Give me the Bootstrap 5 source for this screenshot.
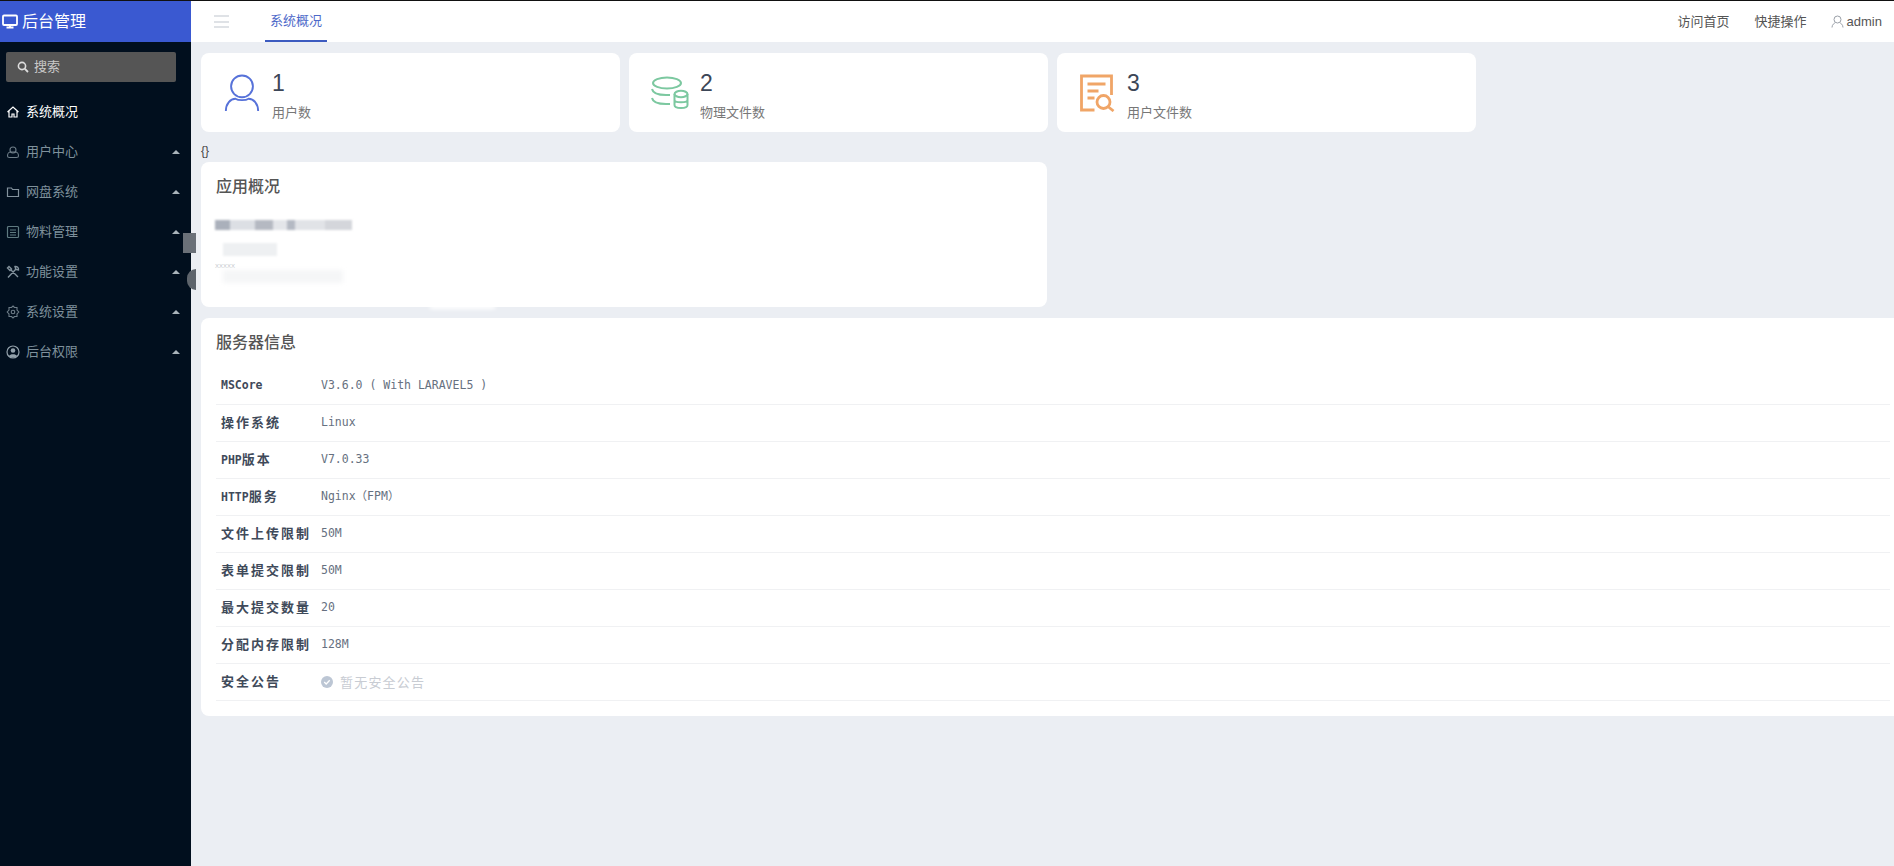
<!DOCTYPE html>
<html lang="zh">
<head>
<meta charset="utf-8">
<title>后台管理</title>
<link href="https://cdn.jsdelivr.net/npm/bootstrap@5.3.0/dist/css/bootstrap.min.css" rel="stylesheet">
<style>
html,body{height:100%;}
body{background:#ebeef3;font-family:"Liberation Sans","Noto Sans CJK SC",sans-serif;color:#555;font-size:13px;overflow:hidden;}
.topline{height:1px;background:#111;}
.shell{height:865px;}
.side{width:191px;flex:none;background:#010f1e;}
.brand{height:41px;background:#3a59d1;color:#fff;font-size:16px;padding-left:2px;gap:4px;}
.searchbox{height:30px;margin:10px 15px 10px 6px;width:170px;background:#555;border-radius:2px;color:#c9c9c9;font-size:13px;padding-left:11px;gap:5px;}
.menu-link{height:40px;color:#7f919c;font-size:13px;padding:0 11px 0 6px;gap:6px;}
.menu-link.on{color:#fff;}
.menu-link svg{width:14px;height:14px;flex:none;}
.up{width:0;height:0;border:4px solid transparent;border-top:0;border-bottom:4px solid #a9b4bb;margin-left:auto;}
.workspace{min-width:0;}
.headbar{height:41px;background:#fff;padding:0 12px 0 23px;}
.burger{width:15px;height:13px;flex:none;border-top:2px solid #dfe2e6;border-bottom:2px solid #dfe2e6;position:relative;margin-right:36px;}
.burger::after{content:"";position:absolute;left:0;right:0;top:3.5px;height:2px;background:#dfe2e6;}
.tabitem{height:41px;width:62px;color:#4d69c9;font-size:13px;border-bottom:2px solid #3d5bc0;margin-top:0;}
.headlink{color:#555;font-size:13px;margin-left:25px;}
.userlink{margin-left:24px;gap:3px;color:#555;}
.panelwrap{padding:11px 0 0 10px;}
.statgrid{display:grid;grid-template-columns:repeat(3,419px);column-gap:9px;}
.statbox{height:79px;border:0;border-radius:8px;flex-direction:row;align-items:center;padding-left:22px;gap:11px;}
.stattext{padding-top:7px;}
.statnum{font-size:23px;line-height:26px;color:#3c4657;margin-top:-1px;}
.statlabel{font-size:13px;color:#777;line-height:18px;margin-top:8px;}
.braces{height:30px;line-height:16px;padding-top:11px;font-size:12px;color:#444;}
.appbox{width:846px;height:145px;border:0;border-radius:8px;padding:15px;position:relative;overflow:visible;}
.boxtitle{font-size:16px;line-height:20px;color:#555;margin:0;}
.blur1{position:absolute;left:14px;top:58px;width:137px;height:10px;filter:blur(1.2px);background:linear-gradient(90deg,#aab0bb 0 15px,#dcdfe4 15px 40px,#b5b9c2 40px 58px,#e3e5e9 58px 72px,#b4b9c3 72px 80px,#e1e3e7 80px 110px,#d4d6db 110px 137px);}
.blur2{position:absolute;left:22px;top:81px;width:54px;height:13px;background:#eef0f2;filter:blur(1px);}
.blur3{position:absolute;left:22px;top:108px;width:120px;height:13px;background:#f5f6f7;filter:blur(2px);}
.blur4{position:absolute;left:14px;top:101px;font-size:6px;line-height:6px;color:#c6c9ce;}
.smudge{position:absolute;left:229px;top:142px;width:65px;height:5px;background:#fff;filter:blur(2px);}
.serverbox{height:398px;margin-top:11px;border:0;border-radius:8px 0 0 8px;padding:15px 4px 0 15px;}
.infotable{margin-top:14px;--bs-table-bg:transparent;--bs-table-border-color:#f0f1f3;}
.infotable td{height:37px;padding:0;vertical-align:middle;font-family:"DejaVu Sans Mono","Liberation Mono","Noto Sans CJK SC",monospace;font-size:11.5px;color:#667080;border-bottom-width:1px;}
.infotable td.lab{width:105px;padding-left:5px;font-weight:700;color:#3f4a5a;}
.cjk{font-family:"Noto Sans CJK SC",sans-serif;font-size:13px;letter-spacing:2px;}
.muted-note{color:#c8ccd3;font-size:13px;letter-spacing:1.2px;gap:7px;font-family:"Noto Sans CJK SC",sans-serif;}
.tabchip{position:absolute;left:183px;top:232px;width:13px;height:20px;background:#6a7078;}
.halfdot{position:absolute;left:187px;top:268px;width:9px;height:21px;background:#5d646c;border-radius:12px 0 0 12px;}
</style>
</head>
<body>
<div class="topline"></div>
<div class="shell d-flex position-relative">
  <aside class="side d-flex flex-column">
    <div class="brand d-flex align-items-center">
      <svg width="16" height="15" viewBox="0 0 16 15"><rect x="1" y="1.5" width="14" height="9.5" rx="1" fill="none" stroke="#fff" stroke-width="1.8"/><path d="M4.5 13.5h7M8 11v2.5" stroke="#fff" stroke-width="1.8"/></svg>
      <span>后台管理</span>
    </div>
    <div class="searchbox d-flex align-items-center">
      <svg width="12" height="12" viewBox="0 0 12 12"><circle cx="5" cy="5" r="3.6" fill="none" stroke="#ddd" stroke-width="1.6"/><path d="M7.7 7.7L11 11" stroke="#ddd" stroke-width="1.8"/></svg>
      <span>搜索</span>
    </div>
    <nav class="nav flex-column">
      <a class="nav-link menu-link on d-flex align-items-center" href="#">
        <svg viewBox="0 0 14 14" fill="none" stroke="#fff" stroke-width="1.2"><path d="M1.5 7L7 2l5.5 5M3 6v6h3V9h2v3h3V6"/></svg><span>系统概况</span></a>
      <a class="nav-link menu-link d-flex align-items-center" href="#">
        <svg viewBox="0 0 14 14" fill="none" stroke="#6e7d88" stroke-width="1.1"><circle cx="7" cy="5" r="3"/><path d="M1.5 11c0-3 2-4 3-4h5c1 0 3 1 3 4 0 1-1 1.500-2 1.500H3.500c-1 0-2-.5-2-1.500z"/></svg><span>用户中心</span><i class="up"></i></a>
      <a class="nav-link menu-link d-flex align-items-center" href="#">
        <svg viewBox="0 0 14 14" fill="none" stroke="#83929d" stroke-width="1.2"><path d="M1.500 3h4l1 1.500h6V11.500h-11z"/></svg><span>网盘系统</span><i class="up"></i></a>
      <a class="nav-link menu-link d-flex align-items-center" href="#">
        <svg viewBox="0 0 14 14" fill="none" stroke="#5f7a80" stroke-width="1.2"><rect x="1.500" y="1.500" width="11" height="11" rx="1"/><path d="M4 5h6M4 7.500h6M4 10h6"/></svg><span>物料管理</span><i class="up"></i></a>
      <a class="nav-link menu-link d-flex align-items-center" href="#">
        <svg viewBox="0 0 14 14" fill="none" stroke="#83929d" stroke-width="1.4"><path d="M2 12.500L10 4M9 1.500a3 3 0 0 1 3.500 3.500l-2-.5-1-1zM12 12L4.500 4.500M1.500 3L3 1.500l2.500 2.500L4 5.500z"/></svg><span>功能设置</span><i class="up"></i></a>
      <a class="nav-link menu-link d-flex align-items-center" href="#">
        <svg viewBox="0 0 14 14" fill="none" stroke="#6e7d88" stroke-width="1.1"><path d="M7 1l1.500 1.500h2.500v2.500L12.800 7 11 9v2.500H8.500L7 13l-1.500-1.500H3V9L1.200 7 3 5V2.500h2.500z"/><circle cx="7" cy="7" r="1.800"/></svg><span>系统设置</span><i class="up"></i></a>
      <a class="nav-link menu-link d-flex align-items-center" href="#">
        <svg viewBox="0 0 14 14"><circle cx="7" cy="7" r="6" fill="none" stroke="#93a1ab" stroke-width="1.200"/><circle cx="7" cy="5.500" r="2.300" fill="#93a1ab"/><path d="M3 11c1-2.500 7-2.500 8 0-2 2-6 2-8 0z" fill="#93a1ab"/></svg><span>后台权限</span><i class="up"></i></a>
    </nav>
  </aside>
  <main class="workspace flex-grow-1 d-flex flex-column">
    <header class="headbar d-flex align-items-center">
      <span class="burger"></span>
      <div class="tabitem d-flex align-items-center justify-content-center">系统概况</div>
      <a class="headlink text-decoration-none ms-auto" href="#">访问首页</a>
      <a class="headlink text-decoration-none" href="#">快捷操作</a>
      <a class="headlink userlink text-decoration-none d-flex align-items-center" href="#">
        <svg width="13" height="13" viewBox="0 0 13 13" fill="none" stroke="#9aa0a8" stroke-width="1"><circle cx="6.500" cy="4.500" r="3.500"/><path d="M1 12.500c0-3 2.500-4.500 3-4.500M12 12.500c0-3-2.500-4.500-3-4.500"/></svg>
        <span>admin</span>
      </a>
    </header>
    <div class="panelwrap">
      <div class="statgrid">
        <div class="card statbox">
          <svg width="38" height="38" viewBox="0 0 38 40" fill="none" stroke="#5772d9" stroke-width="2"><circle cx="19" cy="13" r="11.500"/><path d="M2 39c0-8 5-13 10-13 3 2 11 2 14 0 5 0 10 5 10 13"/></svg>
          <div class="stattext"><div class="statnum">1</div><div class="statlabel">用户数</div></div>
        </div>
        <div class="card statbox">
          <svg width="38" height="34" viewBox="0 0 38 34" fill="none" stroke="#7cc8a0" stroke-width="2"><ellipse cx="16" cy="7" rx="14" ry="5.500"/><path d="M1 13c1 5 8 6 14 6h4M1 22c1 5 8 6 14 6h4"/><ellipse cx="30" cy="18" rx="6.500" ry="3.200"/><path d="M23.500 18v11c0 4 13 4 13 0V18M23.500 24c0 3 13 3 13 0"/></svg>
          <div class="stattext"><div class="statnum">2</div><div class="statlabel">物理文件数</div></div>
        </div>
        <div class="card statbox">
          <svg width="37" height="38" viewBox="0 0 36 38" fill="none" stroke="#f0a567" stroke-width="2.800"><path d="M15 36H2V2h30v19"/><path d="M8 10h18M8 17h11M8 24h7"/><circle cx="24" cy="28" r="6.500"/><path d="M29 33l5 4"/></svg>
          <div class="stattext"><div class="statnum">3</div><div class="statlabel">用户文件数</div></div>
        </div>
      </div>
      <div class="braces">{}</div>
      <div class="card appbox">
        <h5 class="boxtitle">应用概况</h5>
        <div class="blur1"></div>
        <div class="blur2"></div>
        <div class="blur4">XXXXX</div>
        <div class="blur3"></div>
        <div class="smudge"></div>
      </div>
      <div class="card serverbox">
        <h5 class="boxtitle">服务器信息</h5>
        <table class="table infotable mb-0">
          <tbody>
            <tr><td class="lab">MSCore</td><td>V3.6.0 ( With LARAVEL5 )</td></tr>
            <tr><td class="lab"><span class="cjk">操作系统</span></td><td>Linux</td></tr>
            <tr><td class="lab">PHP<span class="cjk">版本</span></td><td>V7.0.33</td></tr>
            <tr><td class="lab">HTTP<span class="cjk">服务</span></td><td>Nginx（FPM）</td></tr>
            <tr><td class="lab"><span class="cjk">文件上传限制</span></td><td>50M</td></tr>
            <tr><td class="lab"><span class="cjk">表单提交限制</span></td><td>50M</td></tr>
            <tr><td class="lab"><span class="cjk">最大提交数量</span></td><td>20</td></tr>
            <tr><td class="lab"><span class="cjk">分配内存限制</span></td><td>128M</td></tr>
            <tr><td class="lab"><span class="cjk">安全公告</span></td><td><span class="muted-note d-flex align-items-center"><svg width="12" height="12" viewBox="0 0 12 12"><circle cx="6" cy="6" r="6" fill="#bcc6d4"/><path d="M3.200 6l2 2 3.500-3.700" fill="none" stroke="#fff" stroke-width="1.300"/></svg>暂无安全公告</span></td></tr>
          </tbody>
        </table>
      </div>
    </div>
  </main>
  <div class="tabchip"></div>
  <div class="halfdot"></div>
</div>
<script src="https://cdn.jsdelivr.net/npm/bootstrap@5.3.0/dist/js/bootstrap.bundle.min.js"></script>
</body>
</html>
